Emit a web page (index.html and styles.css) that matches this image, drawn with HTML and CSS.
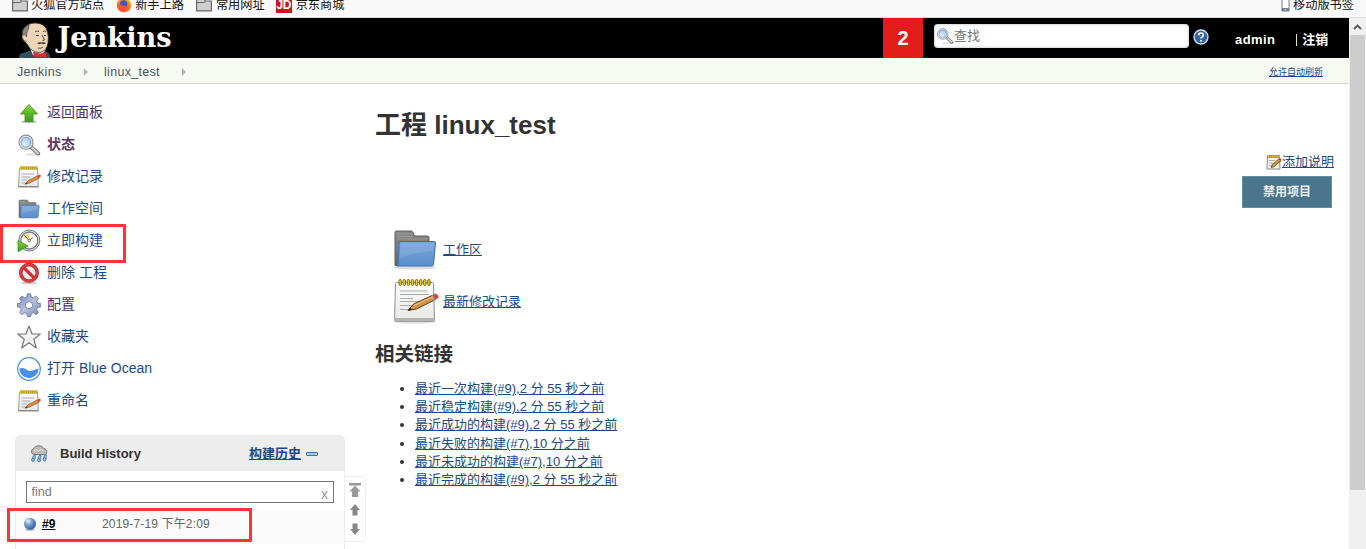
FILE: index.html
```html
<!DOCTYPE html>
<html lang="zh-CN">
<head>
<meta charset="utf-8">
<title>linux_test [Jenkins]</title>
<link rel="stylesheet" href="styles.css">
</head>
<body>
<svg class="defs" width="0" height="0" aria-hidden="true">
  <defs>
    <linearGradient id="g-green" x1="0" y1="0" x2="0" y2="1"><stop offset="0" stop-color="#8ad636"/><stop offset="1" stop-color="#389b18"/></linearGradient>
    <linearGradient id="g-blue" x1="0" y1="0" x2="0" y2="1"><stop offset="0" stop-color="#75a3d6"/><stop offset="1" stop-color="#5b90cc"/></linearGradient>
    <linearGradient id="g-grey" x1="0" y1="0" x2="0" y2="1"><stop offset="0" stop-color="#8a8a8a"/><stop offset="1" stop-color="#6a6a6a"/></linearGradient>
    <linearGradient id="g-paper" x1="0" y1="0" x2="0" y2="1"><stop offset="0" stop-color="#fdfdfd"/><stop offset="1" stop-color="#e6e6e4"/></linearGradient>
    <linearGradient id="g-gear" x1="0" y1="0" x2="1" y2="1"><stop offset="0" stop-color="#7080b0"/><stop offset=".5" stop-color="#b9c2de"/><stop offset="1" stop-color="#747ba5"/></linearGradient>
    <radialGradient id="g-lens" cx=".4" cy=".65" r=".7"><stop offset="0" stop-color="#e4f0fd"/><stop offset="1" stop-color="#8fb6e6"/></radialGradient>
    <radialGradient id="g-ball" cx=".35" cy=".28" r=".75"><stop offset="0" stop-color="#f0f6ff"/><stop offset=".35" stop-color="#86a9d8"/><stop offset="1" stop-color="#2a5a9f"/></radialGradient>
    <radialGradient id="g-fox" cx=".4" cy=".75" r=".8"><stop offset="0" stop-color="#ff3b3b"/><stop offset=".6" stop-color="#ff7a1a"/><stop offset="1" stop-color="#ffd52e"/></radialGradient>
    <symbol id="i-folder-sm" viewBox="0 0 16 14"><path d="M.6 12.900V.6h7.200l1.500 2.400h6.100v9.900z" fill="#cfcfd1" stroke="#68686c" stroke-width="1.200"/><path d="M1 4.500h7.500L9.800 3" fill="none" stroke="#68686c"/></symbol>
    <symbol id="i-up" viewBox="0 0 24 24"><ellipse cx="12" cy="20.800" rx="8" ry="1.500" fill="#bbb"/><path d="M12 3.500 20.500 13H16v7.500H8V13H3.500z" fill="url(#g-green)" stroke="#3c8a1c" stroke-width=".8" stroke-linejoin="round"/></symbol>
    <symbol id="i-search" viewBox="0 0 24 24"><ellipse cx="15" cy="21.500" rx="7" ry="1.200" fill="#ddd"/><path d="m14.500 14.500 6.700 6" stroke="#777" stroke-width="4" stroke-linecap="round"/><path d="m15 14.800 6 5.400" stroke="#d4d4d4" stroke-width="2" stroke-linecap="round"/><circle cx="9" cy="9.200" r="7" fill="url(#g-lens)" stroke="#8b8b89" stroke-width="1.200"/><circle cx="9" cy="9.200" r="5.800" fill="none" stroke="#eee" stroke-width="1.200"/><circle cx="9" cy="9.200" r="5" fill="none" stroke="#7096c8" stroke-width=".8"/></symbol>
    <symbol id="i-pad-sm" viewBox="0 0 24 24"><path d="M2.500 3.500h18l.8 18.500H1.500z" fill="url(#g-paper)" stroke="#9a9a96"/><path d="M2 21.600h19" stroke="#888"/><path d="M4.500 9h13M4.500 12h9M4.500 15h5M4.500 18h4" stroke="#aaa"/><path d="M3 3h17.500" stroke="#9a8418" stroke-width="3"/><path d="M3 3h17.500" stroke="#e6c92d" stroke-width="2.400" stroke-dasharray="1.300 .9"/><path d="m8 19.300 3.600-4.100 9-4.400 1.300 2.600-9.200 4.600z" fill="#d0904a" stroke="#8a5a28" stroke-width=".6"/><path d="m20 11.100 2.500-1.500q1.500.3 1.300 1.900l-2.200 1.900z" fill="#dd4a32"/><path d="m8 19.300 1.800-2.200 1 1.400z" fill="#333"/></symbol>
    <symbol id="i-note" viewBox="0 0 16 16"><path d="M1.500 2h12l.5 13H1z" fill="#f6f6f2" stroke="#888"/><path d="M1.500 2.500h12.500" stroke="#8c7612" stroke-width="3"/><path d="M2 2.500h12" stroke="#f0d233" stroke-width="2.500" stroke-dasharray="1.300 .8"/><path d="M3 6.500h6M3 9h3.500M3 11.500h2" stroke="#aaa"/><path d="m5 13.500 1.200-3 7-5.800 1.800 2-7.200 6z" fill="#d59a45" stroke="#704016" stroke-width=".8"/><path d="m12.700 5 1.200-1 1.800 2-1.200 1z" fill="#cc3f2d"/></symbol>
    <symbol id="i-folder" viewBox="0 0 48 48"><ellipse cx="24" cy="42.500" rx="21" ry="2" fill="#ddd"/><path d="M4 40.500V7.500q0-1.500 1.500-1.500h14.500q1.500 0 2 1.500l1.500 3.500h13q1.500 0 1.500 1.500v28z" fill="url(#g-grey)" stroke="#5c5c5c"/><path d="M5.500 9h15M5.500 11.500h16M5.500 14h31" stroke="#a4a4a4" stroke-width=".7"/><path d="M9 16.500h34.500q1.200 0 1 1.500l-2 21.500q-.2 1.500-1.800 1.500H6q1-.5 1.100-2l.9-21q0-1.500 1-1.500z" fill="url(#g-blue)" stroke="#3a6fae"/><path d="M9.500 18h33.600l-.9 8C31 27 17 29 8.600 34z" fill="#fff" opacity=".12"/></symbol>
    <symbol id="i-pad" viewBox="0 0 48 48"><ellipse cx="24" cy="44.500" rx="21" ry="2" fill="#ddd"/><path d="M5.500 5.500h36q1 0 1 1l1 36q0 2-1.500 2H5q-1.500 0-1.500-2l1-36q0-1 1-1z" fill="url(#g-paper)" stroke="#909090"/><path d="M3.500 41h40v1.500q0 2-1.500 2H5q-1.500 0-1.500-2z" fill="#b4b4b4"/><path d="M9 14h28M9 17.500h29M9 21.500h13M9 24.500h20M9 28.500h15M9 32.500h9" stroke="#aaa" stroke-width="1.200"/><g fill="#e9cf31" stroke="#776000" stroke-width=".9"><rect x="8" y="2.500" width="2.400" height="6" rx="1.200"/><rect x="12.100" y="2.500" width="2.400" height="6" rx="1.200"/><rect x="16.200" y="2.500" width="2.400" height="6" rx="1.200"/><rect x="20.300" y="2.500" width="2.400" height="6" rx="1.200"/><rect x="24.400" y="2.500" width="2.400" height="6" rx="1.200"/><rect x="28.500" y="2.500" width="2.400" height="6" rx="1.200"/><rect x="32.600" y="2.500" width="2.400" height="6" rx="1.200"/><rect x="36.700" y="2.500" width="2.400" height="6" rx="1.200"/></g><path d="m17 33.500 5.500-6.500L41 18.500l2.500 4.500-18 9z" fill="#cf9048" stroke="#704016"/><path d="m23 28.500 18.500-8.500" stroke="#efc58b"/><path d="m41.500 18.300 3-1.300q2.800.5 2.700 3.500L44 23z" fill="#e34036" stroke="#9f4a3f" stroke-width=".6"/><path d="m40 19 1.700-.7 2.300 4.500-1.700.8z" fill="#aaa"/><path d="m17 33.500 2.300-2.900 1.700 2.100z" fill="#222"/></symbol>
    <symbol id="i-clock" viewBox="0 0 24 24"><circle cx="12.300" cy="11.500" r="10.500" fill="#e7e7e5" stroke="#77777b"/><circle cx="12.300" cy="11.500" r="8.500" fill="#f8f8f4" stroke="#77779a" stroke-width="1.300"/><path d="M12.300 11.500V4.300A7.300 7.300 0 0 0 6 8z" fill="#f2d672"/><path d="m7.500 6.500 4.800 5 3.500-3" fill="none" stroke="#666"/><circle cx="12.300" cy="11.500" r="1.200" fill="#fff" stroke="#444" stroke-width=".7"/><path d="M1 11.500 11 17 1 22.800z" fill="url(#g-green)" stroke="#3b941b" stroke-width=".8"/></symbol>
    <symbol id="i-stop" viewBox="0 0 24 24"><ellipse cx="12" cy="22" rx="8" ry="1.300" fill="#ccc"/><circle cx="12" cy="11.800" r="8.300" fill="#f1eded" stroke="#b51920" stroke-width="3.400"/><circle cx="12" cy="11.800" r="8.300" fill="none" stroke="#dc3d40" stroke-width="2.200"/><path d="m6.500 6.300 11 11" stroke="#d02d32" stroke-width="3.200"/></symbol>
    <symbol id="i-gear" viewBox="0 0 24 24"><path d="m10.300.8 3.400 0 .6 3.300 2 .8 2.800-2 2.400 2.400-1.800 2.900.8 1.900 3.200.6v3.200l-3.200.7-.9 2 1.900 2.900-2.500 2.200-2.700-1.900-2 .8-.6 3h-3.400l-.6-3-2-.8-2.700 1.900-2.500-2.200 1.900-2.900-.9-2L.3 13.900v-3.200l3.200-.6.8-1.900-1.800-2.900 2.400-2.400 2.800 2 2-.8z" fill="url(#g-gear)" stroke="#6b75a0" stroke-width=".8"/><circle cx="12" cy="12.200" r="3.600" fill="#fff" stroke="#7c84aa"/></symbol>
    <symbol id="i-star" viewBox="0 0 24 24"><path d="m12 1 3 8h8.300l-6.500 5.300L19.300 23 12 17.800 4.700 23l2.500-8.700L.7 9H9z" fill="#f4f4f2" stroke="#777" stroke-width="1.200" stroke-linejoin="round"/></symbol>
    <symbol id="i-ocean" viewBox="0 0 24 24"><circle cx="12" cy="12" r="11.300" fill="#fff" stroke="#4a90e2" stroke-width="1.200"/><path d="M2.300 11.500c3-1.300 5.500-.4 7.700 1.300 3.500 2.600 6 .2 11.700-1.300a9.700 9.700 0 0 1-19.400 0z" fill="#4a90e2"/></symbol>
    <symbol id="i-storm" viewBox="0 0 18 18"><path d="M4 9.500a3.500 3 0 0 1-.5-5.700C5-.2 12-.3 13.700 3.500c3.800.2 4.300 5.500.8 6.200z" fill="#bcbcb8" stroke="#777"/><path d="M4 6q2-3 4-.5M8 7q2.500-4 5-1" fill="none" stroke="#eee"/><g fill="#a9c6ed" stroke="#376fae" stroke-width=".9"><path d="M5 9.500q-4 3.500-1.500 4.500T5 9.500zM10.500 9.500q-4 4-1.500 5T10.500 9.500zM16 9q-4 4-1.500 5T16 9z"/><circle cx="3" cy="14.800" r="1.500"/><circle cx="9" cy="15.200" r="1.500"/><circle cx="14.500" cy="14.500" r="1.500"/></g></symbol>
    <symbol id="i-arrow" viewBox="0 0 10 12"><path d="M5 0 10 6H7.500v5.500h-5V6H0z" fill="#888"/></symbol>
  </defs>
</svg>

<div class="bookmarks">
  <span class="bm"><svg width="16" height="14"><use href="#i-folder-sm"/></svg>火狐官方站点</span>
  <span class="bm bm-fox"><svg width="16" height="16" viewBox="0 0 16 16"><circle cx="8" cy="8" r="7.300" fill="url(#g-fox)"/><circle cx="7.700" cy="7" r="3.700" fill="#3b58c9"/><path d="M1 5q1 3 4 2.500Q7 9 10 9q-1 3-5 2.500Q2 10.500 1 5z" fill="#ff5a27"/></svg>新手上路</span>
  <span class="bm bm-common"><svg width="16" height="14"><use href="#i-folder-sm"/></svg>常用网址</span>
  <span class="bm bm-jd"><b class="jd">JD</b>京东商城</span>
  <span class="bm bm-mobile"><svg width="9" height="14" viewBox="0 0 9 14"><rect x=".5" y=".5" width="8" height="13" rx="1.200" fill="#777d86"/><path d="M1.500 2h6v8h-6z" fill="#fff"/><circle cx="4.500" cy="11.800" r=".8" fill="#ddd"/></svg>移动版书签</span>
</div>

<div class="window">
  <div class="page">
    <header class="header">
      <svg class="logo" width="160" height="40" viewBox="0 0 160 40">
        <path d="M0 40q0-5 4-5l6-2 15 0q6 1 6.500 7z" fill="#335061"/>
        <path d="m10 28 4 9 8 2 5-8z" fill="#fff"/>
        <path d="M5 23Q1.500 18 4 12 8 4.500 17 5q10 .5 11.500 9 1.500 5 .5 11-1.500 9-9 9.500Q12 34 8 26l-2-2z" fill="#efd6b8" stroke="#332c28" stroke-width=".8"/>
        <path d="M10 7Q4 9 3.500 14l.5 5 2-2 1.500 2q0-6 2-8z" fill="#888" stroke="#333" stroke-width=".6"/>
        <path d="M6 17q-4 0-2 4 1 3 4 2" fill="#efd6b8" stroke="#8b6c54" stroke-width=".7"/>
        <path d="M16 14q2-2 4-.5M24 13.500q1.500-1 3 0M17 17.500h3M25 17.500h2M23 17l2.500 5-2 .5M19 30q3 1 5-1" fill="none" stroke="#4b3930" stroke-width=".9"/>
        <path d="M18 25.500q2.500-2.500 4.500-1 3-1.500 4.500 1-3 1.500-4.500 0-2 1.500-4.500 0z" fill="#54443c"/>
        <path d="m14.500 34 6.500 2 6-2 .5 6-6-1.500-6 1.500z" fill="#d33833" stroke="#8b1e20" stroke-width=".5"/>
        <text x="38.500" y="28.500" class="logo-text" textLength="114" lengthAdjust="spacingAndGlyphs">Jenkins</text>
      </svg>
      <span class="alert">2</span>
      <div class="search"><svg width="18" height="18" viewBox="0 0 24 24"><use href="#i-search"/></svg>查找</div>
      <svg class="help" width="16" height="16" viewBox="0 0 16 16"><circle cx="8" cy="8" r="7" fill="#3465a4" stroke="#d7e2f0" stroke-width="1.300"/><path d="M5.700 6.200Q5.700 4 8 4t2.300 2q0 1.300-1.300 2-1 .5-1 1.500" fill="none" stroke="#fff" stroke-width="1.700"/><circle cx="8" cy="11.700" r="1" fill="#fff"/></svg>
      <span class="user">admin</span>
      <span class="logout"><i class="divider"></i>注销</span>
    </header>
    <nav class="crumbs">
      <span class="crumb">Jenkins</span><i class="chev"></i><span class="crumb crumb-job">linux_test</span><i class="chev"></i>
      <a class="refresh">允许自动刷新</a>
    </nav>
    <div class="body">
      <aside class="side">
        <div class="tasks">
          <a class="task visited"><svg width="24" height="24"><use href="#i-up"/></svg><span>返回面板</span></a>
          <a class="task visited current"><svg width="24" height="24"><use href="#i-search"/></svg><span>状态</span></a>
          <a class="task"><svg width="24" height="24"><use href="#i-pad-sm"/></svg><span>修改记录</span></a>
          <a class="task"><svg width="24" height="24"><use href="#i-folder"/></svg><span>工作空间</span></a>
          <a class="task"><svg width="24" height="24"><use href="#i-clock"/></svg><span>立即构建</span></a>
          <a class="task"><svg width="24" height="24"><use href="#i-stop"/></svg><span>删除 工程</span></a>
          <a class="task visited"><svg width="24" height="24"><use href="#i-gear"/></svg><span>配置</span></a>
          <a class="task"><svg width="24" height="24"><use href="#i-star"/></svg><span>收藏夹</span></a>
          <a class="task"><svg width="24" height="24"><use href="#i-ocean"/></svg><span>打开 Blue Ocean</span></a>
          <a class="task"><svg width="24" height="24"><use href="#i-pad-sm"/></svg><span>重命名</span></a>
        </div>
        <div class="history-wrap">
          <section class="history">
            <div class="history-head"><svg width="18" height="18"><use href="#i-storm"/></svg><span class="history-title">Build History</span><a class="trend">构建历史</a><i class="collapse"></i></div>
            <div class="find"><span>find</span><span class="clear">x</span></div>
            <div class="build"><svg width="14" height="14" viewBox="0 0 14 14"><ellipse cx="7" cy="12.500" rx="5" ry="1.300" fill="#bbb"/><circle cx="7" cy="6.700" r="6" fill="url(#g-ball)"/></svg><a class="build-no">#9</a><span class="build-date">2019-7-19 下午2:09</span></div>
          </section>
          <div class="pager">
            <svg width="12" height="14" viewBox="0 0 12 14"><path d="M0 0h12v2.500H0zM6 2.500 11.500 8.500H9V14H3V8.500H.5z" fill="#999"/></svg>
            <svg width="10" height="12"><use href="#i-arrow"/></svg>
            <svg class="down" width="10" height="12"><use href="#i-arrow"/></svg>
          </div>
        </div>
      </aside>
      <main class="main">
        <h1 class="title">工程 linux_test</h1>
        <div class="actions">
          <div class="describe"><svg width="16" height="16"><use href="#i-note"/></svg><a class="link">添加说明</a></div>
          <span class="disable">禁用项目</span>
        </div>
        <div class="shortcuts">
          <div class="shortcut"><svg width="48" height="48"><use href="#i-folder"/></svg><a class="link">工作区</a></div>
          <div class="shortcut"><svg width="48" height="48"><use href="#i-pad"/></svg><a class="link">最新修改记录</a></div>
        </div>
        <h2 class="subtitle">相关链接</h2>
        <ul class="permalinks">
          <li><a class="link">最近一次构建(#9),2 分 55 秒之前</a></li>
          <li><a class="link">最近稳定构建(#9),2 分 55 秒之前</a></li>
          <li><a class="link">最近成功的构建(#9),2 分 55 秒之前</a></li>
          <li><a class="link">最近失败的构建(#7),10 分之前</a></li>
          <li><a class="link">最近未成功的构建(#7),10 分之前</a></li>
          <li><a class="link">最近完成的构建(#9),2 分 55 秒之前</a></li>
        </ul>
      </main>
    </div>
  </div>
  <div class="scrollbar"><svg width="9" height="6" viewBox="0 0 9 6"><path d="m1 5 3.500-3.500L8 5" fill="none" stroke="#555" stroke-width="1.800"/></svg><i class="thumb"></i></div>
</div>
<div class="mark mark-build"></div>
<div class="mark mark-run"></div>
</body>
</html>
```
FILE: styles.css
```css
* { box-sizing: border-box; }
body { margin: 0; width: 1366px; height: 549px; overflow: hidden; position: relative; background: #fff; color: #333; font: 13px/18px "Liberation Sans", "Noto Sans CJK SC", sans-serif; }
svg { flex: none; display: block; }
.defs { position: absolute; }
.bookmarks { height: 18px; display: flex; align-items: flex-start; background: #f9f9f9; border-bottom: 1px solid #dedede; padding-left: 12px; color: #111; font-size: 12.200px; line-height: 14px; }
.bm { display: flex; gap: 3px; margin-top: -3px; height: 16px; align-items: center; flex: none; white-space: nowrap; }
.bm-fox { margin-left: 12px; }
.bm-common { margin-left: 12px; gap: 4px; }
.bm-jd { margin-left: 11px; gap: 4px; }
.jd { width: 16px; height: 16px; background: #c91623; color: #fff; font-size: 12px; line-height: 17px; text-align: center; letter-spacing: -.5px; }
.bm-mobile { margin-left: auto; margin-right: 12px; }
.window { display: flex; height: 531px; }
.page { width: 1349px; flex: none; }
.header { height: 40px; background: #000; display: flex; color: #fff; font-weight: bold; }
.logo { margin-left: 19px; }
.logo-text { font: bold 27px "DejaVu Serif", serif; fill: #fff; }
.alert { margin-left: 704px; width: 40px; line-height: 40px; background: #e31b1b; font-size: 20px; text-align: center; }
.search { margin: 6px 0 0 11px; width: 255px; height: 24px; border-radius: 4px; background: #fff; box-shadow: inset 0 0 3px #aaa; display: flex; align-items: center; gap: 0; padding-left: 2px; color: #777; font-weight: normal; }
.help { margin: 11px 0 0 4px; }
.user { margin: 13px 0 0 26px; font-size: 13px; letter-spacing: .4px; }
.logout { display: flex; gap: 5px; margin: 13px 0 0 21px; align-items: center; height: 18px; font-size: 13px; }
.divider { width: 1px; height: 12px; background: #dfe6bb; }
.crumbs { height: 26px; background: #f6faf2; border-bottom: 1px solid #d3d6d0; display: flex; align-items: center; padding: 2px 26px 0 17px; color: #4d545d; }
.crumb { width: 67px; font-size: 12.500px; letter-spacing: .3px; }
.crumb-job { margin-left: 16px; width: 78px; }
.chev { width: 0; height: 0; border: 4px solid transparent; border-left-color: #b5b5b5; border-right: 0; }
.refresh { margin-left: auto; font-size: 9px; color: #204a87; text-decoration: underline; }
.body { display: flex; }
.side { width: 375px; flex: none; padding: 12px 0 0 15px; }
.task { display: flex; align-items: center; gap: 6px; height: 32px; padding: 1px 0 0 2px; font-size: 14px; color: #204a87; }
.task span { padding-bottom: 2px; }
.visited { color: #5c3566; }
.visited:not(.current) { color: #49306b; }
.current { font-weight: bold; }
.history-wrap { display: flex; margin-top: 19px; }
.history { width: 330px; height: 130px; border: 1px solid #ededed; border-radius: 5px 5px 0 0; background: #fff; }
.history-head { height: 35px; background: #ededed; display: flex; align-items: center; padding-left: 14px; font-weight: bold; }
.history-title { margin-left: 12px; width: 189px; }
.trend { color: #204a87; text-decoration: underline; }
.collapse { width: 12px; height: 4px; margin: 1px 0 0 5px; border: 1px solid #4474ae; border-radius: 1px; background: #a8c5e8; }
.find { margin: 10px 10px 0; width: 308px; height: 22px; border: 1px solid #777; display: flex; justify-content: space-between; align-items: center; padding: 0 5px 0 4.500px; color: #777; font-size: 12.500px; }
.clear { color: #999; font-size: 14px; padding-top: 3px; }
.build { margin-top: 8px; height: 33px; background: #fafafa; display: flex; align-items: center; padding: 0 0 7px 7px; color: #666; font-size: 12px; }
.build-no { margin-left: 5px; width: 60px; color: #000; font-weight: bold; text-decoration: underline; }
.build-date { letter-spacing: .15px; }
.pager { width: 21px; height: 66px; margin-top: 41px; border: 1px solid #ededed; border-left: 0; border-radius: 0 5px 5px 0; display: flex; flex-direction: column; align-items: center; gap: 7px; padding-top: 6px; }
.down { transform: rotate(180deg); }
.main { flex: 1; padding-right: 15px; }
.title { margin: 24px 0 0; font-size: 26px; line-height: 34px; }
.actions { display: flex; flex-direction: column; align-items: flex-end; margin-top: 11px; }
.describe { display: flex; align-items: center; height: 18px; }
.link { color: #204a87; text-decoration: underline; }
.disable { margin: 5px 2px 0 0; width: 90px; height: 32px; line-height: 30px; border: 1px solid #5f8ea5; background: #4b758b; color: #eee; font-size: 12px; font-weight: bold; text-align: center; }
.shortcuts { margin: 17px 0 0 16px; display: flex; flex-direction: column; gap: 4px; }
.shortcut { display: flex; align-items: center; gap: 4px; height: 48px; }
.shortcut .link { padding-top: 1px; }
.subtitle { margin: 17px 0 0; font-size: 19.500px; line-height: 24px; }
.permalinks { margin: 14px 0 0; padding: 0 0 0 40px; line-height: 18.200px; }
.scrollbar { width: 17px; height: 531px; background: #f0f0f0; display: flex; flex-direction: column; align-items: center; padding: 6px 0 0; }
.thumb { width: 15px; height: 455px; margin-top: 5px; background: #cdcdcd; }
.mark { position: absolute; border: 3px solid #fd3535; }
.mark-build { left: 0; top: 224px; width: 126px; height: 39px; }
.mark-run { left: 7px; top: 508px; width: 245px; height: 34px; }
```
